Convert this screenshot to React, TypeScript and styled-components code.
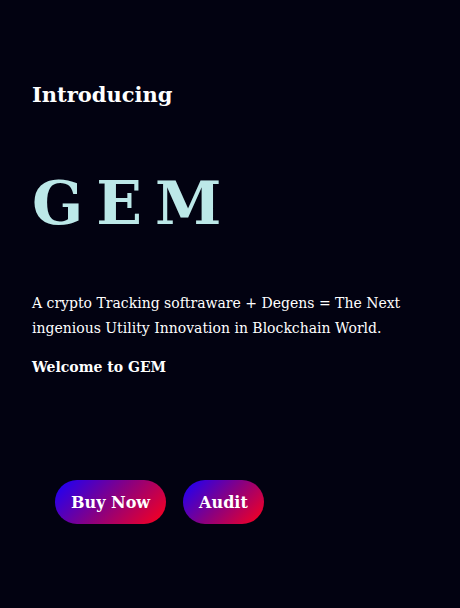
import styled, { createGlobalStyle } from 'styled-components';

const GlobalStyle = createGlobalStyle`
  html, body {
    margin: 0;
    padding: 0;
    background-color: #020211;
  }
  body {
    font-family: Rockwell, 'DejaVu Serif', serif;
    color: #ffffff;
  }
`;

const Page = styled.div`
  min-width: 453px;
  min-height: 5860px;
  background-color: #020211;
`;

const Hero = styled.section`
  padding: 80px 32px 0;
`;

const Intro = styled.h2`
  margin: 0;
  font-size: 21px;
  font-weight: 700;
  line-height: 30px;
`;

const Title = styled.h1`
  margin: 53px 0 0;
  font-size: 60px;
  font-weight: 700;
  line-height: 80px;
  letter-spacing: 13px;
  color: #bce8e8;
`;

const Text = styled.p`
  margin: 48px 0 0;
  max-width: 390px;
  font-size: 14px;
  line-height: 25px;
`;

const Welcome = styled.p`
  margin: 14px 0 0;
  font-size: 14px;
  font-weight: 700;
  line-height: 25px;
`;

const Actions = styled.div`
  display: flex;
  gap: 17px;
  margin: 100px 0 0 23px;
`;

const Button = styled.a`
  display: flex;
  align-items: center;
  justify-content: center;
  height: 44px;
  padding: 0 16px;
  border-radius: 22px;
  background: linear-gradient(135deg, #1500ff 0%, #8a0080 50%, #ff0018 100%);
  color: #ffffff;
  font-size: 16px;
  font-weight: 700;
  text-decoration: none;
  cursor: pointer;
`;

const App = () => {
  return (
    <>
      <GlobalStyle />
      <Page>
        <Hero>
          <Intro>Introducing</Intro>
          <Title>GEM</Title>
          <Text>
            A crypto Tracking softraware + Degens = The Next ingenious Utility Innovation in Blockchain World.
          </Text>
          <Welcome>Welcome to GEM</Welcome>
          <Actions>
            <Button>Buy Now</Button>
            <Button>Audit</Button>
          </Actions>
        </Hero>
      </Page>
    </>
  );
};

export default App;
